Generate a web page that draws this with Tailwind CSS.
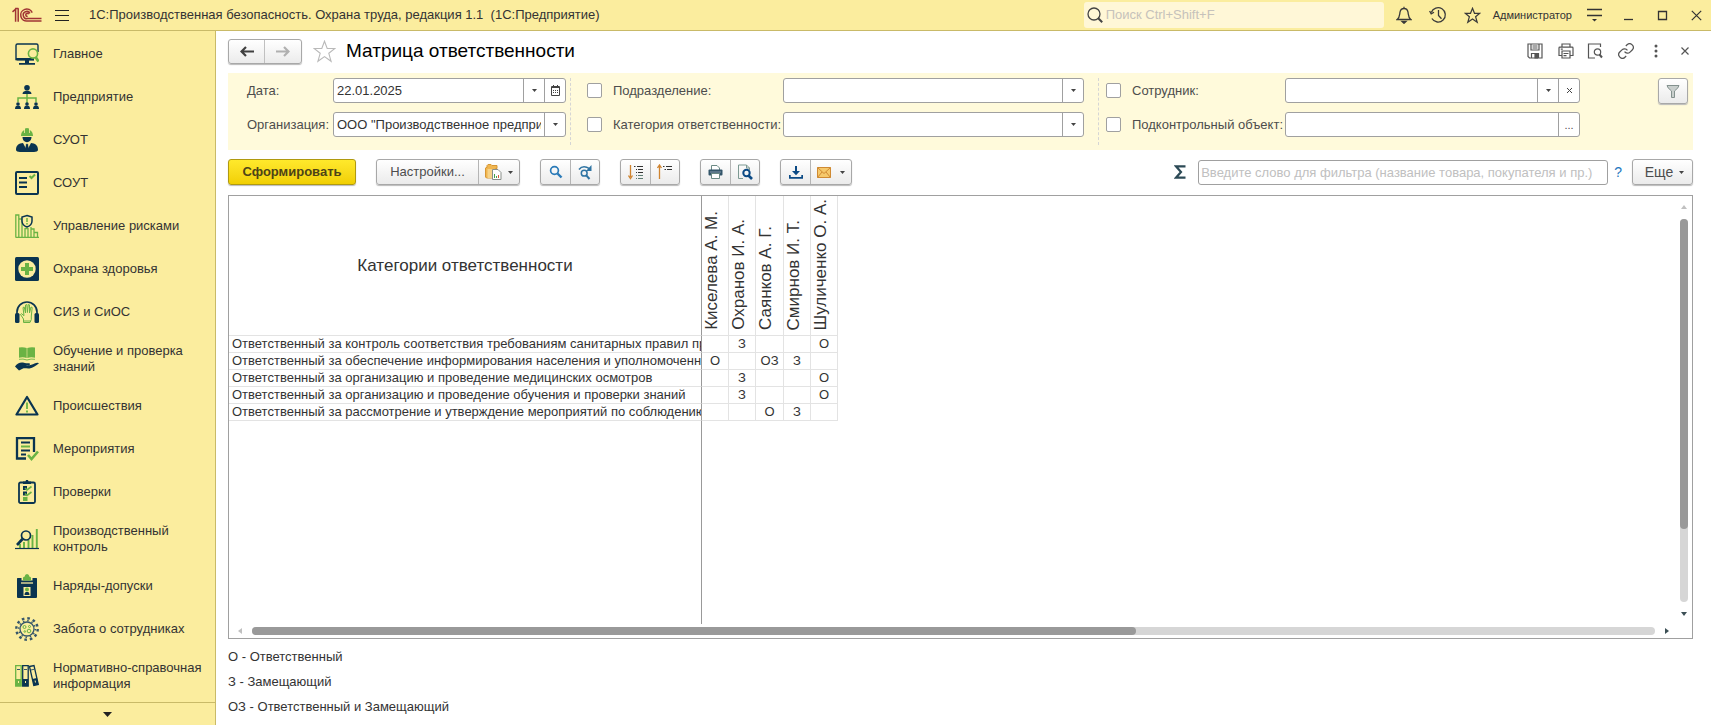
<!DOCTYPE html>
<html lang="ru">
<head>
<meta charset="utf-8">
<title>Матрица ответственности</title>
<script src="https://cdn.jsdelivr.net/npm/@tailwindcss/browser@4"></script>
</head>
<body class="flex h-screen flex-col overflow-hidden bg-white font-['Liberation_Sans',Arial,sans-serif] text-[13px] leading-4 text-[#333]">

<!-- Title bar -->
<header class="flex h-[31px] shrink-0 items-center border-b border-[#c9ba68] bg-[#fbed9e]">
  <svg class="ml-3 h-4 w-[30px] shrink-0" viewBox="0 0 30 16" fill="none" stroke="#a03434" stroke-width="1.5" role="img" aria-label="1С">
    <path d="M.5 4.800 3.400 2.400M3.600 1.200v13.600M6.200 1.200v13.600M3.200 1.500h3.200"/>
    <path d="M20.200 5.600A6 6 0 1 0 15.600 14H29.500"/>
    <path d="M18 6.300A3.600 3.600 0 1 0 15.600 11.600H29.500"/>
    <path d="M16.600 7.200a1.500 1.500 0 1 0-1 2.100"/>
  </svg>
  <button class="ml-[11px] p-0.5" aria-label="Меню">
    <svg class="block h-3 w-[14px]" viewBox="0 0 14 12" stroke="#222"><path d="M0 1.500h14M0 6.500h14M0 11.500h14"/></svg>
  </button>
  <h1 class="ml-[18px] text-[13px] whitespace-pre">1С:Производственная безопасность. Охрана труда, редакция 1.1  (1С:Предприятие)</h1>
  <label class="ml-auto flex h-[26px] w-[300px] items-center rounded-[3px] bg-[#fff7d7] pl-[3px]">
    <svg class="h-4 w-4 shrink-0" viewBox="0 0 16 16" fill="none" stroke="#444"><circle cx="7" cy="7" r="6" stroke-width="1.300"/><path d="m11 11 4.200 4.200" stroke-width="2"/></svg>
    <input type="search" aria-label="Поиск" placeholder="Поиск Ctrl+Shift+F" class="ml-[3px] w-full bg-transparent text-[13px] outline-none placeholder:text-[#c6c2bb]">
  </label>
  <button class="ml-3" aria-label="Уведомления">
    <svg class="block h-[18px] w-4" viewBox="0 0 16 18" fill="none" stroke="#3a3a3a" stroke-width="1.300"><path d="M1.200 13.500c2.600-2 2.300-4.500 2.800-7.300C4.400 3.800 6 2.500 8 2.500s3.600 1.300 4 3.700c.5 2.800.2 5.300 2.800 7.300zM8 .8v1.700"/><path d="M6 15.500h4l-2 1.800z" fill="#3a3a3a"/></svg>
  </button>
  <button class="ml-[17px]" aria-label="История">
    <svg class="block h-[18px] w-[18px]" viewBox="0 0 18 18" fill="none" stroke="#3a3a3a" stroke-width="1.300"><path d="M2.300 6.500a7.200 7.200 0 1 1 .6 6M9.500 4v5.500l3 3.200"/><path d="m.6 5 1.600 2.800L5 6.200" /></svg>
  </button>
  <button class="ml-[17px]" aria-label="Избранное">
    <svg class="block h-[17px] w-[17px]" viewBox="0 0 17 17" fill="none" stroke="#3a3a3a" stroke-width="1.200"><path d="m8.500 1.300 2 5h5.300l-4.200 3.400 1.600 5.600-4.700-3.300-4.700 3.300 1.600-5.600L1.200 6.300h5.300z"/></svg>
  </button>
  <a href="#" class="ml-3 text-[11px]">Администратор</a>
  <button class="ml-[15px]" aria-label="Настройки окна">
    <svg class="block h-[14px] w-[15px]" viewBox="0 0 15 14" stroke="#333" stroke-width="1.300"><path d="M0 1.500h15M0 7.500h15"/><path d="M5 11h5l-2.500 2.500z" fill="#333" stroke="none"/></svg>
  </button>
  <button class="ml-[21px]" aria-label="Свернуть"><svg class="block h-3 w-[11px]" viewBox="0 0 11 12" stroke="#333" stroke-width="1.300"><path d="M1 10.500h9"/></svg></button>
  <button class="ml-[23px]" aria-label="Развернуть"><svg class="block h-[11px] w-[11px]" viewBox="0 0 11 11" fill="none" stroke="#333" stroke-width="1.300"><path d="M1.500 1.500h8v8h-8z"/></svg></button>
  <button class="mr-[9px] ml-[23px]" aria-label="Закрыть"><svg class="block h-[11px] w-[11px]" viewBox="0 0 11 11" stroke="#333" stroke-width="1.200"><path d="m.8.8 9.400 9.400m0-9.400L.8 10.200"/></svg></button>
</header>

<div class="flex min-h-0 flex-1">

<!-- Sections -->
<nav class="flex w-[216px] shrink-0 flex-col border-r border-[#c9ba68] bg-[#fbed9e]">
  <div class="min-h-0 flex-1 overflow-hidden pt-px">
    <a href="#" class="flex h-[43px] items-center gap-[14px] pl-[15px]">
      <svg class="h-6 w-6 shrink-0" viewBox="0 0 24 24" fill="none"><path d="M23 10V3.500a1.500 1.500 0 0 0-1.500-1.500h-19A1.500 1.500 0 0 0 1 3.500v14h18" stroke="#0a3450" stroke-width="1.400"/><path d="M1 16h18v2.500H2.500A1.500 1.500 0 0 1 1 17zM10 18h4v3h-4zM4 21h16v1.800H4z" fill="#0a3450"/><circle cx="18" cy="11.500" r="4.600" stroke="#6ab344" stroke-width="1.600"/><path d="m20.500 15 3 4.500" stroke="#6ab344" stroke-width="2.800"/></svg>
      <span>Главное</span></a>
    <a href="#" class="flex h-[43px] items-center gap-[14px] pl-[15px]">
      <svg class="h-6 w-6 shrink-0" viewBox="0 0 24 24"><path d="M12 8v10M3 17v-4h18v4" fill="none" stroke="#6ab344" stroke-width="1.500"/><g fill="#0a3450"><circle cx="12" cy="2.800" r="2.800"/><path d="M7.500 9c0-2.500 2-3.300 4.500-3.300s4.500.800 4.500 3.300z"/><circle cx="3" cy="19" r="1.800"/><path d="M0 24c0-2.500 1-3.500 3-3.500s3 1 3 3.500z"/><circle cx="12" cy="19" r="1.800"/><path d="M9 24c0-2.500 1-3.500 3-3.500s3 1 3 3.500z"/><circle cx="21" cy="19" r="1.800"/><path d="M18 24c0-2.500 1-3.500 3-3.500s3 1 3 3.500z"/></g></svg>
      <span>Предприятие</span></a>
    <a href="#" class="flex h-[43px] items-center gap-[14px] pl-[15px]">
      <svg class="h-6 w-6 shrink-0" viewBox="0 0 24 24"><path d="M6 8c0-3 1.200-5 3.200-6v3h.8V.5Q12-.4 14 .5V5h.8V2c2 1 3.200 3 3.200 6z" fill="#6ab344"/><path d="M7.500 9h9c0 3-2 5.200-4.500 5.200S7.500 12 7.500 9zM1 22c0-5 3-6.500 7-7l4 7.500 4-7.500c4 .5 7 2 7 7 0 1-2 2-4 2H5c-2 0-4-1-4-2z" fill="#0a3450"/><path d="m11 16.500 1-1 1 1 .8 4.500-1.800 2.500-1.800-2.500z" fill="#0a3450"/></svg>
      <span>СУОТ</span></a>
    <a href="#" class="flex h-[43px] items-center gap-[14px] pl-[15px]">
      <svg class="h-6 w-6 shrink-0" viewBox="0 0 24 24" fill="none"><rect x="1" y="1" width="22" height="22" rx="1" stroke="#0a3450" stroke-width="2"/><path d="M4 7h8M4 11.500h8M4 16h8" stroke="#0a3450" stroke-width="1.800"/><path d="m14.500 5 2 2 3.500-3.500" stroke="#6ab344" stroke-width="2"/></svg>
      <span>СОУТ</span></a>
    <a href="#" class="flex h-[43px] items-center gap-[14px] pl-[15px]">
      <svg class="h-6 w-6 shrink-0" viewBox="0 0 24 24" fill="none"><path d="M.8 23.300V1h3v22M4 5h3v18M10 14v9M13 14v9M16 13v10M10 14.500h3M16 15h3v8M19 18.500h3.500v4.500M.5 23.300h23.500" stroke="#6ab344" stroke-width="1.300"/><path d="M12 1.500 17 3v4c0 3-2 5-5 6-3-1-5-3-5-6V3z" stroke="#0a3450" stroke-width="1.500" fill="#fbed9e"/><path d="M12 4v4M12 9v1.500" stroke="#6ab344" stroke-width="1.500"/></svg>
      <span>Управление рисками</span></a>
    <a href="#" class="flex h-[43px] items-center gap-[14px] pl-[15px]">
      <svg class="h-6 w-6 shrink-0" viewBox="0 0 24 24"><rect width="24" height="24" rx="1.500" fill="#0a3450"/><circle cx="12" cy="12" r="8.700" fill="#fbed9e"/><path d="M10 6h4v4h4v4h-4v4h-4v-4H6v-4h4z" fill="#6ab344"/></svg>
      <span>Охрана здоровья</span></a>
    <a href="#" class="flex h-[43px] items-center gap-[14px] pl-[15px]">
      <svg class="h-6 w-6 shrink-0" viewBox="0 0 24 24" fill="none"><path d="M2 15v-3a10 10 0 0 1 20 0v3" stroke="#0a3450" stroke-width="1.700"/><rect y="13" width="4.500" height="10" rx="1.500" fill="#0a3450"/><rect x="19.500" y="13" width="4.500" height="10" rx="1.500" fill="#0a3450"/><path d="M8.500 22.500V19L5.500 14.500l1-.8 2.500 2L8 7.500l1.200-.5 1.300 6V5l1.300-.5.6 8 .9-8 1.200.4v8.100l1.500-6 1.200.5-.9 8.500v3.500l-1.300 3z" stroke="#6ab344" stroke-width="1"/><path d="M8.500 21h7" stroke="#6ab344"/></svg>
      <span>СИЗ и СиОС</span></a>
    <a href="#" class="flex h-[51px] items-center gap-[14px] pl-[15px]">
      <svg class="h-6 w-6 shrink-0" viewBox="0 0 24 24"><path d="M4 .5q4-.8 7.700.5V11Q8 9.800 4 10.800zM12.300 1Q16-.3 20 .5v10.300q-4-1-7.700.2z" fill="#6ab344"/><path d="M4 12.300q4-.8 8 .7 4-1.500 8-.7" fill="none" stroke="#6ab344" stroke-width=".9"/><path d="M0 19.500c2-3 5-4.500 8-4 1.500.3 2.500 1 6 .8 1.500 0 1.200 1.700 0 1.900h-3c3 .6 6-.4 8.500-1.700 2-1 4-.9 4.500-.2-3 2-6 5-9.500 5.200-3 .3-5-.7-7 .3L4 23.500z" fill="#0a3450"/></svg>
      <span>Обучение и проверка<br>знаний</span></a>
    <a href="#" class="flex h-[43px] items-center gap-[14px] pl-[15px]">
      <svg class="h-6 w-6 shrink-0" viewBox="0 0 24 24" fill="none"><path d="M12 3 1.500 20.500h21z" stroke="#0a3450" stroke-width="2.200" stroke-linejoin="round"/><path d="M12 8.500v6.500M12 16.500v2" stroke="#6ab344" stroke-width="1.800"/></svg>
      <span>Происшествия</span></a>
    <a href="#" class="flex h-[43px] items-center gap-[14px] pl-[15px]">
      <svg class="h-6 w-6 shrink-0" viewBox="0 0 24 24" fill="none"><path d="M11 21.500H2V1.200h17V15" stroke="#0a3450" stroke-width="2.300"/><path d="M6 5.500h9M6 13.500h9" stroke="#0a3450" stroke-width="2"/><path d="M6 9.500h9" stroke="#6ab344" stroke-width="2"/><path d="M6 17.500h5" stroke="#0a3450" stroke-width="2"/><path d="m13 18 3.500 4L23 14.500" stroke="#6ab344" stroke-width="2.600"/></svg>
      <span>Мероприятия</span></a>
    <a href="#" class="flex h-[43px] items-center gap-[14px] pl-[15px]">
      <svg class="h-6 w-6 shrink-0" viewBox="0 0 24 24" fill="none"><rect x="4" y="2.500" width="16" height="20.500" rx="1.500" stroke="#0a3450" stroke-width="1.800"/><path d="M8 1.500h2.500L11 0h2l.5 1.500H16V4H8z" fill="#0a3450"/><path d="M8 6h4v4H8zM8 11.500h4v4H8z" fill="#0a3450"/><path d="M8 17h4.500v4H8z" fill="#6ab344"/><path d="m10 8 2 2 4.500-3.500M10 13.500l2 2 4.500-3.500" stroke="#6ab344" stroke-width="1.600"/></svg>
      <span>Проверки</span></a>
    <a href="#" class="flex h-[51px] items-center gap-[14px] pl-[15px]">
      <svg class="h-6 w-6 shrink-0" viewBox="0 0 24 24" fill="none"><path d="M5 17v4M9 15v6M13.500 13v8M17.500 8v13M21.800 2v19" stroke="#6ab344" stroke-width="1.900"/><circle cx="11" cy="8.500" r="4.500" stroke="#0a3450" stroke-width="1.700" fill="#fbed9e"/><path d="m7.500 12-5.500 6" stroke="#0a3450" stroke-width="2.600"/><path d="M0 21.500h24" stroke="#0a3450" stroke-width="1.200"/></svg>
      <span>Производственный<br>контроль</span></a>
    <a href="#" class="flex h-[43px] items-center gap-[14px] pl-[15px]">
      <svg class="h-6 w-6 shrink-0" viewBox="0 0 24 24"><path d="M2.500 4h4v2.500h11V4h4q.5 0 .5 1v18q0 1-1 1H3q-1 0-1-1V5q0-1 .5-1z" fill="#0a3450"/><path d="M8 6.500V4Q8 2.800 9.500 2.800 10 0 12 0t2.500 2.800Q16 2.800 16 4v2.500z" fill="#6ab344"/><path d="M6 9h12" stroke="#fbed9e" stroke-width="1.300"/><path d="M8.500 13h7v9h-7z" fill="#fbed9e"/><circle cx="12" cy="15.500" r="2" fill="#6ab344"/><path d="M9.500 21c0-2.500 1-3 2.500-3s2.500.5 2.500 3z" fill="#0a3450"/></svg>
      <span>Наряды-допуски</span></a>
    <a href="#" class="flex h-[43px] items-center gap-[14px] pl-[15px]">
      <svg class="h-6 w-6 shrink-0" viewBox="0 0 24 24" fill="none"><circle cx="12" cy="12" r="7" stroke="#36566a" stroke-width="1.300"/><circle cx="12" cy="12" r="8.300" stroke="#36566a" stroke-width="1.500" stroke-dasharray="1.400 2.946"/><circle cx="12" cy="12" r="10.700" stroke="#36566a" stroke-width="2.400" stroke-dasharray="2.600 3.002"/><g stroke="#6ab344"><circle cx="9.500" cy="10" r="1.500"/><circle cx="14.500" cy="9.500" r="1"/><circle cx="14" cy="14" r="1.800"/><circle cx="9.800" cy="14.500" r=".8"/></g></svg>
      <span>Забота о сотрудниках</span></a>
    <a href="#" class="flex h-[51px] items-center gap-[14px] pl-[15px]">
      <svg class="h-6 w-6 shrink-0" viewBox="0 0 24 24" fill="none"><path d="M.7 1.700h5.500v20.500H.7z" stroke="#6ab344" stroke-width="1.300"/><path d="M.7 15h5.500v7H.7z" fill="#6ab344"/><path d="M7.700 1.700h5.500v20.500H7.700z" stroke="#0a3450" stroke-width="1.300"/><path d="M7.700 15h5.500v7H7.700z" fill="#0a3450"/><path d="m14.500 2.500 4.500-1 4.300 19-4.500 1z" stroke="#0a3450" stroke-width="1.300"/><path d="m17.300 15 4.700-1 1.500 6.500-4.600 1z" fill="#0a3450"/><path d="M2 5.500h3M9 5.500h3M16 6l3-.7" stroke="#36566a"/><path d="M3 18h1M10 18h1M19.800 17.600l1-.2" stroke="#fbed9e" stroke-width="2"/></svg>
      <span>Нормативно-справочная<br>информация</span></a>
  </div>
  <button class="flex h-[23px] shrink-0 items-center justify-center border-t border-[#c9ba68]" aria-label="Далее">
    <svg class="h-[5px] w-[9px]" viewBox="0 0 9 5" fill="#222"><path d="M0 0h9L4.500 5z"/></svg>
  </button>
</nav>

<main class="flex min-w-0 flex-1 flex-col pr-[18px] pl-3">

  <!-- Form header -->
  <div class="flex h-[42px] shrink-0 items-center pb-[2px]">
    <div class="flex h-[25px] rounded-[3px] border border-[#a8a8a8] bg-linear-to-b from-white to-[#ebebeb] shadow-[0_1px_1px_#bbb]">
      <button class="flex w-9 items-center justify-center border-r border-[#c0c0c0]" aria-label="Назад"><svg class="h-[11px] w-[14px]" viewBox="0 0 14 11" fill="none" stroke="#404040" stroke-width="2.200"><path d="M14 5.500H2M6 1 1.500 5.500 6 10"/></svg></button>
      <button class="flex w-9 items-center justify-center" aria-label="Вперед"><svg class="h-[11px] w-[14px]" viewBox="0 0 14 11" fill="none" stroke="#b0b0b0" stroke-width="2.200"><path d="M0 5.500h12M8 1l4.500 4.500L8 10"/></svg></button>
    </div>
    <button class="ml-[11px]" aria-label="В избранное"><svg class="block h-[23px] w-[23px]" viewBox="0 0 23 23" fill="none" stroke="#b9b9b9" stroke-width="1.100"><path d="m11.500 1.200 2.700 7.300h7.700l-6.100 4.800 2.300 8-6.600-4.700-6.600 4.700 2.300-8L1.100 8.500h7.700z"/></svg></button>
    <h2 class="ml-[10px] text-[19px] leading-6 text-black">Матрица ответственности</h2>
    <div class="ml-auto flex items-center text-[#555]">
      <button aria-label="Сохранить"><svg class="block h-4 w-4" viewBox="0 0 16 16" fill="none" stroke="currentColor" stroke-width="1.200"><path d="M1 1h14v14H2.500L1 13.500zM4 1v6h8V1M5.500 3h5M5.500 5h5M4.500 15v-4.500h7V15"/><path d="M8 11h2.500v4H8z" fill="currentColor"/></svg></button>
      <button class="ml-[15px]" aria-label="Печать"><svg class="block h-4 w-4" viewBox="0 0 16 16" fill="none" stroke="currentColor" stroke-width="1.200"><path d="M4 4V1h8v3M4 12.500H1V5q0-.8.8-.8h12.400q.8 0 .8.8v7.500h-3M4 8h8v7H4zM5.500 10.500h5M5.500 12.700h3M2.800 6.200h2"/></svg></button>
      <button class="ml-[13px]" aria-label="Просмотр"><svg class="block h-4 w-4" viewBox="0 0 16 16" fill="none" stroke="currentColor" stroke-width="1.200"><path d="M13.500 4V1h-12v14H8"/><circle cx="10.500" cy="9" r="3.200"/><path d="m12.500 11.500 2.500 3" stroke-width="2"/></svg></button>
      <button class="ml-[15px]" aria-label="Ссылка"><svg class="block h-4 w-4" viewBox="1 1 22 22" fill="none" stroke="currentColor" stroke-width="1.700"><path d="M10 13a5 5 0 0 0 7.540.540l3-3a5 5 0 0 0-7.070-7.070l-1.720 1.710"/><path d="M14 11a5 5 0 0 0-7.540-.540l-3 3a5 5 0 0 0 7.070 7.070l1.710-1.710"/></svg></button>
      <button class="ml-[14px]" aria-label="Ещё действия"><svg class="block h-4 w-4" viewBox="0 0 16 16" fill="currentColor"><circle cx="8" cy="3" r="1.500"/><circle cx="8" cy="8" r="1.500"/><circle cx="8" cy="13" r="1.500"/></svg></button>
      <button class="ml-[13px]" aria-label="Закрыть форму"><svg class="block h-4 w-4" viewBox="0 0 16 16" stroke="currentColor" stroke-width="1.200"><path d="m4.500 4.500 7 7m0-7-7 7"/></svg></button>
    </div>
  </div>

  <!-- Filters -->
  <section class="grid h-[77px] shrink-0 grid-cols-[343fr_528fr_481fr_113fr] bg-[#fffadb] py-[5px] text-[#4d4d4d]" aria-label="Отборы">
    <div class="grid h-[67px] grid-cols-[86px_minmax(0,1fr)] content-start gap-y-[9px] border-r border-dashed border-[#d5d5d5] pr-1 pl-[19px]">
      <label for="date" class="flex h-[25px] items-center">Дата:</label>
      <div class="flex h-[25px] rounded-[3px] border border-[#a0a0a0] bg-white">
        <input id="date" value="22.01.2025" class="min-w-0 flex-1 pl-[3px] text-[#333] outline-none">
        <button class="flex w-[21px] items-center justify-center border-l border-[#a0a0a0]" aria-label="Выбрать"><svg class="h-[3px] w-[5px]" viewBox="0 0 5 3" fill="#444"><path d="M0 0h5L2.500 3z"/></svg></button>
        <button class="flex w-[21px] items-center justify-center border-l border-[#a0a0a0]" aria-label="Календарь"><svg class="h-[11px] w-[9px]" viewBox="0 0 9 11" fill="none" stroke="#444"><path d="M.5 1.500h8v9h-8zM0 2.500h9M2.500 0v2M6.500 0v2" /><path d="M2 5.500h5M2 7.500h5" stroke-dasharray="1 1"/></svg></button>
      </div>
      <label for="org" class="flex h-[25px] items-center">Организация:</label>
      <div class="flex h-[25px] rounded-[3px] border border-[#a0a0a0] bg-white">
        <input id="org" value="ООО &quot;Производственное предприятие&quot;" class="mr-[3px] min-w-0 flex-1 pl-[3px] text-[#333] outline-none">
        <button class="flex w-[21px] items-center justify-center border-l border-[#a0a0a0]" aria-label="Выбрать"><svg class="h-[3px] w-[5px]" viewBox="0 0 5 3" fill="#444"><path d="M0 0h5L2.500 3z"/></svg></button>
      </div>
    </div>
    <div class="grid h-[67px] grid-cols-[26px_170px_minmax(0,1fr)] content-start items-center gap-y-[9px] border-r border-dashed border-[#d5d5d5] pr-[14px] pl-4">
      <input type="checkbox" id="use-dep" aria-label="Использовать отбор по подразделению" class="h-[15px] w-[15px] appearance-none rounded-[2px] border border-[#a0a0a0] bg-white">
      <label for="dep">Подразделение:</label>
      <div class="flex h-[25px] rounded-[3px] border border-[#a0a0a0] bg-white">
        <input id="dep" class="min-w-0 flex-1 pl-[3px] outline-none">
        <button class="flex w-[21px] items-center justify-center border-l border-[#a0a0a0]" aria-label="Выбрать"><svg class="h-[3px] w-[5px]" viewBox="0 0 5 3" fill="#444"><path d="M0 0h5L2.500 3z"/></svg></button>
      </div>
      <input type="checkbox" id="use-cat" aria-label="Использовать отбор по категории" class="h-[15px] w-[15px] appearance-none rounded-[2px] border border-[#a0a0a0] bg-white">
      <label for="cat" class="whitespace-nowrap">Категория ответственности:</label>
      <div class="flex h-[25px] rounded-[3px] border border-[#a0a0a0] bg-white">
        <input id="cat" class="min-w-0 flex-1 pl-[3px] outline-none">
        <button class="flex w-[21px] items-center justify-center border-l border-[#a0a0a0]" aria-label="Выбрать"><svg class="h-[3px] w-[5px]" viewBox="0 0 5 3" fill="#444"><path d="M0 0h5L2.500 3z"/></svg></button>
      </div>
    </div>
    <div class="grid h-[67px] grid-cols-[26px_153px_minmax(0,1fr)] content-start items-center gap-y-[9px] pl-[7px]">
      <input type="checkbox" id="use-emp" aria-label="Использовать отбор по сотруднику" class="h-[15px] w-[15px] appearance-none rounded-[2px] border border-[#a0a0a0] bg-white">
      <label for="emp">Сотрудник:</label>
      <div class="flex h-[25px] rounded-[3px] border border-[#a0a0a0] bg-white">
        <input id="emp" class="min-w-0 flex-1 pl-[3px] outline-none">
        <button class="flex w-[21px] items-center justify-center border-l border-[#a0a0a0]" aria-label="Выбрать"><svg class="h-[3px] w-[5px]" viewBox="0 0 5 3" fill="#444"><path d="M0 0h5L2.500 3z"/></svg></button>
        <button class="flex w-[21px] items-center justify-center border-l border-[#a0a0a0]" aria-label="Очистить"><svg class="h-[5px] w-[5px]" viewBox="0 0 5 5" stroke="#444"><path d="m0 0 5 5M5 0 0 5"/></svg></button>
      </div>
      <input type="checkbox" id="use-obj" aria-label="Использовать отбор по объекту" class="h-[15px] w-[15px] appearance-none rounded-[2px] border border-[#a0a0a0] bg-white">
      <label for="obj" class="whitespace-nowrap">Подконтрольный объект:</label>
      <div class="flex h-[25px] rounded-[3px] border border-[#a0a0a0] bg-white">
        <input id="obj" class="min-w-0 flex-1 pl-[3px] outline-none">
        <button class="w-[21px] border-l border-[#a0a0a0] text-[11px]" aria-label="Открыть выбор">...</button>
      </div>
    </div>
    <div class="flex items-start justify-end pr-[5px]">
      <button class="flex h-[26px] w-[30px] items-center justify-center rounded-[3px] border border-[#a8a8a8] bg-linear-to-b from-white to-[#ebebeb] shadow-[0_1px_1px_#bbb]" aria-label="Отбор"><svg class="h-[13px] w-[14px]" viewBox="0 0 14 13" fill="#c9cfcd" stroke="#83918e"><path d="M1 .5h12q0 2-4.500 5.500v6.500h-3V6Q1 2.500 1 .5z"/></svg></button>
    </div>
  </section>

  <!-- Command bar -->
  <div class="flex h-[45px] shrink-0 items-center pb-px">
    <button class="h-[26px] w-32 rounded-[3px] border border-[#b09a10] bg-linear-to-b from-[#ffe92b] to-[#f1cf00] text-[13px] font-bold text-[#4d4317] shadow-[0_1px_1px_#bbb]">Сформировать</button>
    <div class="ml-5 flex h-[26px] rounded-[3px] border border-[#a8a8a8] bg-linear-to-b from-white to-[#ebebeb] shadow-[0_1px_1px_#bbb]">
      <button class="w-[102px] border-r border-[#b5b5b5] text-center text-[13px] text-[#4d4d4d]">Настройки...</button>
      <button class="flex w-10 items-center justify-center gap-[6px]" aria-label="Варианты отчета">
        <svg class="h-4 w-[17px]" viewBox="0 0 17 16"><path d="M1 3.500h1V1.500L3 .5h3l1 1h5v3h-1.500L9 14H1.500L.5 13V4z" fill="#f0b650" stroke="#d79735"/><path d="M2.500 5h8v9h-8z" fill="#f7d389"/><path d="M7.500 5.500h5.500l3 3v7H7.500z" fill="#fff" stroke="#8a8f8a"/><path d="M9.500 10v4M11.500 12v2" stroke="#47a14b"/><path d="M13.500 11v3" stroke="#d55a3a"/></svg>
        <svg class="h-[3px] w-[5px]" viewBox="0 0 5 3" fill="#444"><path d="M0 0h5L2.500 3z"/></svg>
      </button>
    </div>
    <div class="ml-5 flex h-[26px] rounded-[3px] border border-[#a8a8a8] bg-linear-to-b from-white to-[#ebebeb] shadow-[0_1px_1px_#bbb]">
      <button class="flex w-[30px] items-center justify-center border-r border-[#b5b5b5]" aria-label="Найти"><svg class="h-[14px] w-[14px]" viewBox="0 0 14 14" fill="none" stroke="#2a7ab8"><circle cx="5.500" cy="5.500" r="3.900" stroke-width="1.700"/><path d="m8.500 8.500 4 4" stroke-width="2.400"/></svg></button>
      <button class="flex w-[28px] items-center justify-center" aria-label="Найти далее"><svg class="h-[15px] w-[15px]" viewBox="0 0 15 15" fill="none" stroke="#2f74a3"><circle cx="6.200" cy="8.200" r="2.900" stroke-width="1.500"/><path d="m8.300 10.300 3.200 3.700" stroke-width="2"/><path d="M1 4.500q4-5 10.500-.8" stroke-width="1.600"/><path d="M13.500 0v6h-5.500z" fill="#2f74a3" stroke="none"/></svg></button>
    </div>
    <div class="ml-5 flex h-[26px] rounded-[3px] border border-[#a8a8a8] bg-linear-to-b from-white to-[#ebebeb] shadow-[0_1px_1px_#bbb]">
      <button class="flex w-[30px] items-center justify-center border-r border-[#b5b5b5]" aria-label="Развернуть группы"><svg class="h-4 w-4" viewBox="0 0 16 16" fill="none"><path d="M2.500 1v12M.5 11.500l2 3 2-3" stroke="#cf8430" stroke-width="1.300"/><path d="M6 2.500h1.500M9 2.500h6M8 5.500h1M10 5.500h5M8 8.500h1M10 8.500h5" stroke="#333"/><path d="M8 11.500h1M10 11.500h5M8 14.500h1M10 14.500h5" stroke="#5d7c72"/></svg></button>
      <button class="flex w-[28px] items-center justify-center" aria-label="Свернуть группы"><svg class="h-4 w-4" viewBox="0 0 16 16" fill="none"><path d="M2.500 15V2M.5 4l2-3 2 3" stroke="#cf8430" stroke-width="1.300"/><path d="M6 2.500h1.500M9 2.500h6M7.500 5.500H9M10 5.500h5" stroke="#333"/></svg></button>
    </div>
    <div class="ml-5 flex h-[26px] rounded-[3px] border border-[#a8a8a8] bg-linear-to-b from-white to-[#ebebeb] shadow-[0_1px_1px_#bbb]">
      <button class="flex w-[30px] items-center justify-center border-r border-[#b5b5b5]" aria-label="Печать отчета"><svg class="h-[14px] w-[15px]" viewBox="0 0 15 14"><path d="M3.500 5V.5H9l2.500 2.500v2" fill="#fff" stroke="#6b8a84"/><rect x=".5" y="4.500" width="14" height="6" rx="1" fill="#34566a"/><path d="M2 7h11" stroke="#9ab" stroke-width=".8"/><path d="M3.500 8.500h8v5h-8z" fill="#fff" stroke="#6b8a84"/></svg></button>
      <button class="flex w-[28px] items-center justify-center" aria-label="Предварительный просмотр"><svg class="h-4 w-[15px]" viewBox="0 0 15 16" fill="none"><path d="M5 14.500H.5V1H8.500l3 3v2" stroke="#7d9992"/><path d="M8.500 1v3h3" stroke="#7d9992"/><circle cx="8.500" cy="9" r="3.200" stroke="#0b4a85" stroke-width="2"/><path d="m10.500 11.500 3.500 3.500" stroke="#0b4a85" stroke-width="2.600"/></svg></button>
    </div>
    <div class="ml-5 flex h-[26px] rounded-[3px] border border-[#a8a8a8] bg-linear-to-b from-white to-[#ebebeb] shadow-[0_1px_1px_#bbb]">
      <button class="flex w-[30px] items-center justify-center border-r border-[#b5b5b5]" aria-label="Сохранить отчет"><svg class="h-[13px] w-[14px]" viewBox="0 0 14 13" fill="#0b4a85"><path d="M6 0h2v5h3L7 9.200 3 5h3zM0 9h1.700v2h10.600V9H14v3.700H0z"/></svg></button>
      <button class="flex w-10 items-center justify-center gap-[9px]" aria-label="Отправить"><svg class="h-[11px] w-[14px]" viewBox="0 0 14 11" fill="#f6c96c" stroke="#cf8a33"><path d="M.5.5h13v10H.5z"/><path d="m.5.5 6.500 6 6.500-6M.5 10.500 5 5M13.500 10.500 9 5" fill="none"/></svg><svg class="h-[3px] w-[5px]" viewBox="0 0 5 3" fill="#444"><path d="M0 0h5L2.500 3z"/></svg></button>
    </div>
    <button class="ml-auto" aria-label="Сумма"><svg class="block h-[14px] w-3" viewBox="0 0 12 14" fill="none" stroke="#2c4a56" stroke-width="2.200"><path d="M11.500 1.300H2L7 7l-5 5.700h9.500"/></svg></button>
    <input aria-label="Фильтр" placeholder="Введите слово для фильтра (название товара, покупателя и пр.)" class="ml-3 h-[25px] w-[410px] rounded-[3px] border border-[#a0a0a0] pl-[2px] outline-none placeholder:text-[#c0c0c0]">
    <a href="#" class="ml-[6px] text-[14px] text-[#1f78c0]">?</a>
    <button class="ml-[10px] flex h-[26px] w-[61px] items-center justify-center gap-[6px] rounded-[3px] border border-[#a8a8a8] bg-linear-to-b from-white to-[#ebebeb] pl-1 text-[14px] text-[#4d4d4d] shadow-[0_1px_1px_#bbb]">Еще<svg class="h-[3px] w-[5px]" viewBox="0 0 5 3" fill="#444"><path d="M0 0h5L2.500 3z"/></svg></button>
  </div>

  <!-- Report -->
  <section class="flex min-h-0 flex-1 flex-col border border-[#a0a0a0]" aria-label="Отчет">
    <div class="flex min-h-0 flex-1">
      <div class="min-w-0 flex-1 overflow-hidden">
        <table class="h-full w-[609px] table-fixed border-separate border-spacing-0">
          <colgroup><col class="w-[473px]"><col class="w-[27px]"><col class="w-[27px]"><col class="w-[28px]"><col class="w-[27px]"><col class="w-[27px]"></colgroup>
          <thead>
            <tr class="h-[140px]">
              <th class="border-r border-b border-r-[#999] border-b-[#e3e3e3] p-0 text-[17px] font-normal">Категории ответственности</th>
              <th class="border-r border-b border-[#e3e3e3] p-0 pb-[5px] align-bottom text-[17px] leading-5 font-normal"><span class="block rotate-180 text-left whitespace-nowrap [writing-mode:vertical-rl]">Киселева А. М.</span></th>
              <th class="border-r border-b border-[#e3e3e3] p-0 pb-[5px] align-bottom text-[17px] leading-5 font-normal"><span class="block rotate-180 text-left whitespace-nowrap [writing-mode:vertical-rl]">Охранов И. А.</span></th>
              <th class="border-r border-b border-[#e3e3e3] p-0 pb-[5px] align-bottom text-[17px] leading-5 font-normal"><span class="block rotate-180 text-left whitespace-nowrap [writing-mode:vertical-rl]">Саянков А. Г.</span></th>
              <th class="border-r border-b border-[#e3e3e3] p-0 pb-[5px] align-bottom text-[17px] leading-5 font-normal"><span class="block rotate-180 text-left whitespace-nowrap [writing-mode:vertical-rl]">Смирнов И. Т.</span></th>
              <th class="border-r border-b border-[#e3e3e3] p-0 pb-[5px] align-bottom text-[17px] leading-5 font-normal"><span class="block rotate-180 text-left whitespace-nowrap [writing-mode:vertical-rl]">Шуличенко О. А.</span></th>
            </tr>
          </thead>
          <tbody class="text-center [&_td]:border-[#e3e3e3] [&_td]:p-0 [&_th]:overflow-hidden [&_th]:border-r [&_th]:border-b [&_th]:border-r-[#999] [&_th]:border-b-[#e3e3e3] [&_th]:p-0 [&_th]:pl-[3px] [&_th]:text-left [&_th]:font-normal [&_th]:whitespace-nowrap">
            <tr class="h-[17px] [&>td]:border-r [&>td]:border-b"><th>Ответственный за контроль соответствия требованиям санитарных правил про</th><td></td><td>З</td><td></td><td></td><td>О</td></tr>
            <tr class="h-[17px] [&>td]:border-r [&>td]:border-b"><th>Ответственный за обеспечение информирования населения и уполномоченны</th><td>О</td><td></td><td>ОЗ</td><td>З</td><td></td></tr>
            <tr class="h-[17px] [&>td]:border-r [&>td]:border-b"><th>Ответственный за организацию и проведение медицинских осмотров</th><td></td><td>З</td><td></td><td></td><td>О</td></tr>
            <tr class="h-[17px] [&>td]:border-r [&>td]:border-b"><th>Ответственный за организацию и проведение обучения и проверки знаний</th><td></td><td>З</td><td></td><td></td><td>О</td></tr>
            <tr class="h-[17px] [&>td]:border-r [&>td]:border-b"><th>Ответственный за рассмотрение и утверждение мероприятий по соблюдению</th><td></td><td></td><td>О</td><td>З</td><td></td></tr>
            <tr class="h-full"><th class="border-b-0!"></th><td colspan="5"></td></tr>
          </tbody>
        </table>
      </div>
      <div class="flex w-[15px] shrink-0 flex-col items-center pt-[9px] pr-px pb-2">
        <svg class="h-1 w-[6px]" viewBox="0 0 6 4" fill="#c0c0c0"><path d="M0 4h6L3 0z"/></svg>
        <div class="my-[10px] flex w-2 flex-1 flex-col rounded-full bg-[#d6d6d6]"><div class="h-[81%] rounded-full bg-[#999]"></div></div>
        <svg class="h-1 w-[6px]" viewBox="0 0 6 4" fill="#3c4f55"><path d="M0 0h6L3 4z"/></svg>
      </div>
    </div>
    <div class="flex h-[14px] shrink-0 items-center pr-[23px] pl-[9px]">
      <svg class="h-[6px] w-1" viewBox="0 0 4 6" fill="#c0c0c0"><path d="M4 0v6L0 3z"/></svg>
      <div class="mx-[10px] h-2 flex-1 rounded-full bg-[#d6d6d6]"><div class="h-2 w-[63%] rounded-full bg-[#999]"></div></div>
      <svg class="h-[6px] w-1" viewBox="0 0 4 6" fill="#3c4f55"><path d="M0 0v6l4-3z"/></svg>
    </div>
  </section>

  <!-- Legend -->
  <div class="flex shrink-0 flex-col gap-[9px] pt-[10px] pb-[10px]">
    <p>О - Ответственный</p>
    <p>З - Замещающий</p>
    <p>ОЗ - Ответственный и Замещающий</p>
  </div>
</main>
</div>
</body>
</html>
